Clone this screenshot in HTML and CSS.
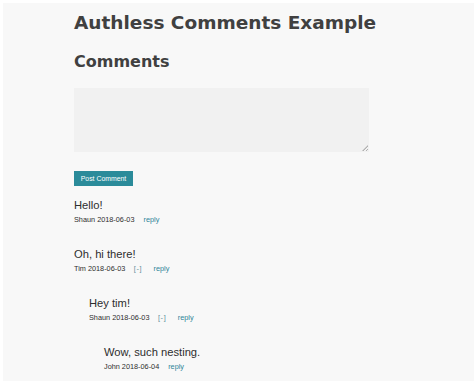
FILE: index.html
```html
<!DOCTYPE html>
<html>
<head>
<meta charset="utf-8">
<link rel="stylesheet" href="styles.css">
</head>
<body>
<div class="page">
  <div class="content">
    <h1 class="title">Authless Comments Example</h1>
    <h2 class="subtitle">Comments</h2>
    <div class="form">
      <div class="textarea"><span class="grip"></span></div>
      <button class="btn">Post Comment</button>
    </div>
    <div class="comments">
      <div class="comment">
        <div class="text">Hello!</div>
        <div class="meta"><span class="author">Shaun</span> <span class="date">2018-06-03</span><a class="reply">reply</a></div>
      </div>
      <div class="comment">
        <div class="text">Oh, hi there!</div>
        <div class="meta"><span class="author">Tim</span> <span class="date">2018-06-03</span><a class="toggle">[-]</a><a class="reply">reply</a></div>
        <div class="children">
          <div class="comment">
            <div class="text">Hey tim!</div>
            <div class="meta"><span class="author">Shaun</span> <span class="date">2018-06-03</span><a class="toggle">[-]</a><a class="reply">reply</a></div>
            <div class="children">
              <div class="comment">
                <div class="text">Wow, such nesting.</div>
                <div class="meta"><span class="author">John</span> <span class="date">2018-06-04</span><a class="reply">reply</a></div>
              </div>
            </div>
          </div>
        </div>
      </div>
    </div>
  </div>
</div>
</body>
</html>
```

FILE: styles.css
```css
html, body {
  margin: 0;
  padding: 0;
  background: #ffffff;
}
.page {
  margin: 3px 0 0 3px;
  height: 378px;
  background: #f8f8f8;
  overflow: hidden;
}
.content {
  padding-left: 71px;
  padding-top: 8px;
}
.title {
  font-family: "DejaVu Sans", Verdana, sans-serif;
  font-weight: bold;
  font-size: 18.5px;
  color: #404040;
  margin: 0;
  line-height: 24px;
}
.subtitle {
  font-family: "DejaVu Sans", Verdana, sans-serif;
  font-weight: bold;
  font-size: 16px;
  color: #404040;
  margin: 16px 0 0 0;
  line-height: 22px;
}
.form {
  margin-top: 15px;
  display: flex;
  flex-direction: column;
  align-items: flex-start;
}
.textarea {
  width: 295px;
  height: 64px;
  background: #f1f1f1;
  position: relative;
}
.grip {
  position: absolute;
  right: 1px;
  bottom: 1px;
  width: 6px;
  height: 6px;
  background: repeating-linear-gradient(135deg, transparent 0 1.5px, #b0b0b0 1.5px 2.5px);
  clip-path: polygon(100% 0, 100% 100%, 0 100%);
}
.btn {
  margin-top: 19px;
  background: #2b8b9a;
  color: #ffffff;
  border: none;
  font-family: "Liberation Sans", Arial, sans-serif;
  font-size: 6.9px;
  height: 15px;
  width: 59px;
  padding: 0;
  line-height: 15px;
}
.comments {
  margin-top: 11.5px;
  font-family: "Liberation Sans", Arial, sans-serif;
}
.comment {
  display: flex;
  flex-direction: column;
}
.text {
  font-size: 11.2px;
  color: #2e2e2e;
  line-height: 14px;
}
.meta {
  font-size: 7.3px;
  color: #2e2e2e;
  line-height: 10px;
  margin-top: 3px;
  margin-bottom: 22px;
}
.toggle {
  color: #5f8f98;
  margin-left: 8.5px;
  margin-right: 2.5px;
  letter-spacing: 0.6px;
}
.reply {
  color: #2f8598;
  margin-left: 9px;
}
.children {
  padding-left: 15px;
}
```
